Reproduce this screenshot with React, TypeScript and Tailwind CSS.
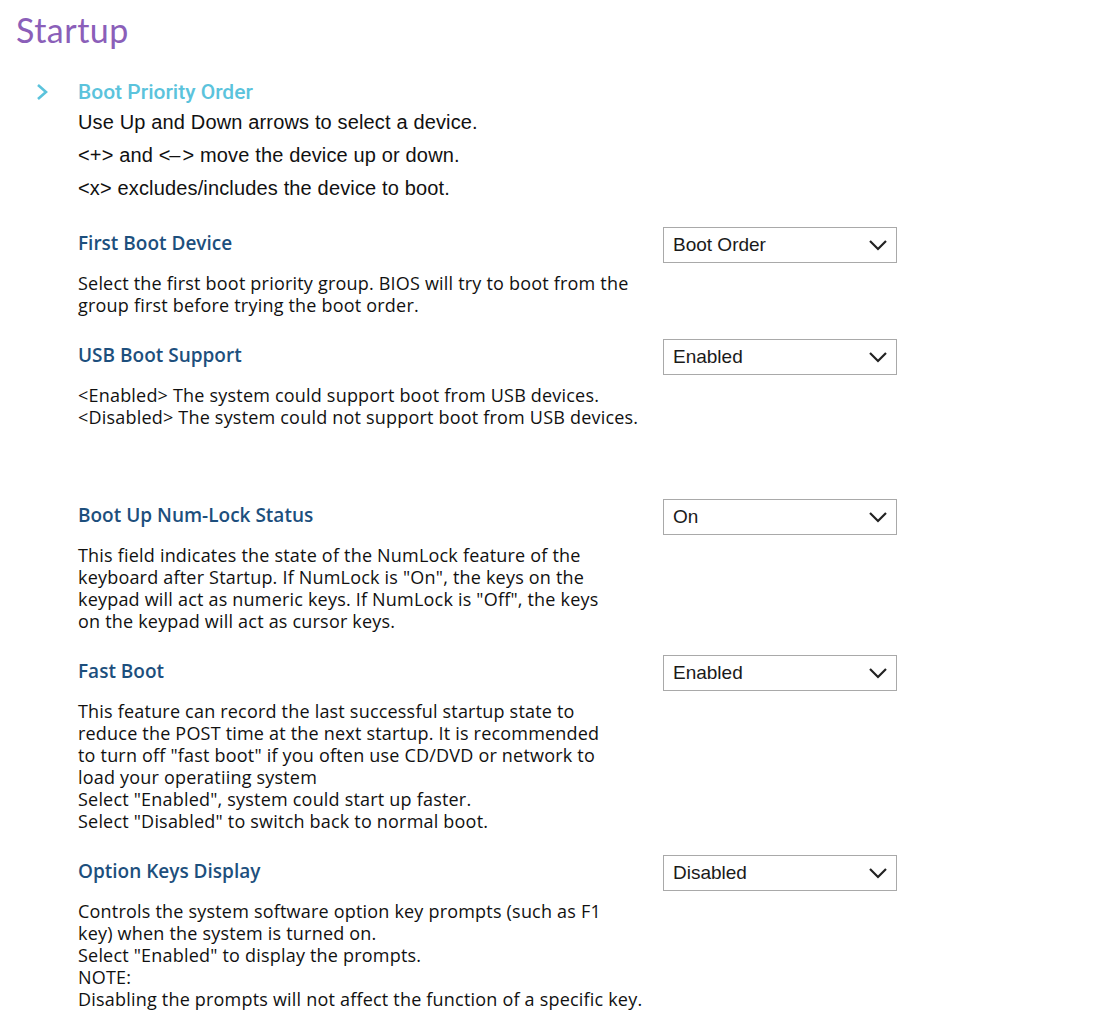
import React from "react";

type Item = {
  title: string;
  value: string;
  lines: string[];
  extra?: number;
};

const items: Item[] = [
  {
    title: "First Boot Device",
    value: "Boot Order",
    lines: [
      "Select the first boot priority group. BIOS will try to boot from the",
      "group first before trying the boot order.",
    ],
  },
  {
    title: "USB Boot Support",
    value: "Enabled",
    lines: [
      "<Enabled> The system could support boot from USB devices.",
      "<Disabled> The system could not support boot from USB devices.",
    ],
    extra: 48,
  },
  {
    title: "Boot Up Num-Lock Status",
    value: "On",
    lines: [
      "This field indicates the state of the NumLock feature of the",
      'keyboard after Startup. If NumLock is "On", the keys on the',
      'keypad will act as numeric keys. If NumLock is "Off", the keys',
      "on the keypad will act as cursor keys.",
    ],
  },
  {
    title: "Fast Boot",
    value: "Enabled",
    lines: [
      "This feature can record the last successful startup state to",
      "reduce the POST time at the next startup. It is recommended",
      'to turn off "fast boot" if you often use CD/DVD or network to',
      "load your operatiing system",
      'Select "Enabled", system could start up faster.',
      'Select "Disabled" to switch back to normal boot.',
    ],
  },
  {
    title: "Option Keys Display",
    value: "Disabled",
    lines: [
      "Controls the system software option key prompts (such as F1",
      "key) when the system is turned on.",
      'Select "Enabled" to display the prompts.',
      "NOTE:",
      "Disabling the prompts will not affect the function of a specific key.",
    ],
  },
];

function Chevron() {
  return (
    <svg width="14" height="18" viewBox="0 0 14 18" fill="none">
      <path d="M3 2 L11 9 L3 16" stroke="#5bc3dc" strokeWidth="2.6" strokeLinecap="butt" strokeLinejoin="miter" />
    </svg>
  );
}

function SelectBox({ value }: { value: string }) {
  return (
    <div className="w-[234px] h-[36px] border border-[#a9a9a9] bg-white flex items-center justify-between pl-[9px] pr-[8px]">
      <span className="text-[19px] text-[#1a1a1a] font-['Liberation_Sans',Arial,sans-serif]">{value}</span>
      <svg width="20" height="12" viewBox="0 0 20 12" fill="none">
        <path d="M2 2 L10 10 L18 2" stroke="#222" strokeWidth="2.2" />
      </svg>
    </div>
  );
}

export default function App() {
  return (
    <div className="bg-white min-h-screen w-full font-['Open_Sans',sans-serif] text-[#111]">
      <div className="pl-[16px] pt-[10px]">
        <h1 className="text-[34px] leading-[40px] text-[#8b5fb9] font-['Lato',sans-serif] font-normal tracking-[0.5px]">
          Startup
        </h1>
      </div>
      <div className="flex mt-[28px]">
        <div className="w-[78px] flex justify-start pl-[35px] pt-[5px]">
          <Chevron />
        </div>
        <div>
          <div className="text-[21px] leading-[28px] font-medium text-[#5bc3dc] font-['Roboto',sans-serif]">Boot Priority Order</div>
          <div className="text-[20px] leading-[33px] tracking-[0.15px] text-[#111] font-['Liberation_Sans',Arial,sans-serif]">
            <div>Use Up and Down arrows to select a device.</div>
            <div>
              {"<+> and "}
              <span className="tracking-[-3px]">{"<"}</span>
              <span className="inline-block w-[15px] text-center">{"–"}</span>
              <span>{"> move the device up or down."}</span>
            </div>
            <div>{"<x> excludes/includes the device to boot."}</div>
          </div>
        </div>
      </div>
      <div className="pl-[78px] mt-[22px] flex flex-col gap-[23px]">
        {items.map((it) => (
          <div key={it.title} style={it.extra ? { marginBottom: it.extra } : undefined}>
            <div className="flex">
              <div className="w-[585px] pt-[2px] text-[19px] leading-[28px] font-semibold text-[#1d4f7d]">{it.title}</div>
              <SelectBox value={it.value} />
            </div>
            <div className="mt-[9px] text-[18px] leading-[22px] tracking-[0.2px] text-[#111] whitespace-nowrap">
              {it.lines.map((l, i) => (
                <div key={i}>{l}</div>
              ))}
            </div>
          </div>
        ))}
      </div>
    </div>
  );
}
